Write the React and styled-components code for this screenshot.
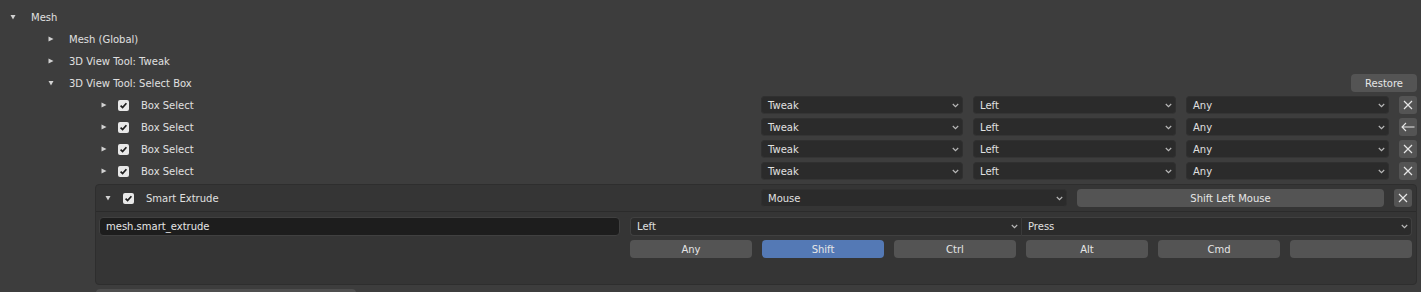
import React from 'react';
import styled, { createGlobalStyle } from 'styled-components';

const GlobalStyle = createGlobalStyle`
  html, body { margin: 0; padding: 0; background: #3d3d3d; }
  body {
    font-family: "DejaVu Sans", "Liberation Sans", sans-serif;
    font-size: 10px;
    color: #e6e6e6;
  }
  * { box-sizing: border-box; }
`;

const Page = styled.div`
  width: 1421px;
  height: 292px;
  overflow: hidden;
  padding-top: 6px;
  background: #3d3d3d;
`;

const TreeRow = styled.div`
  display: flex;
  align-items: center;
  height: 22px;
  padding-left: ${(p) => p.$pad}px;
  padding-right: 4px;
`;

const DisclosureBox = styled.span`
  display: inline-flex;
  flex: none;
  width: 6px;
  height: 6px;
  margin-right: ${(p) => p.$gap}px;
`;

const Label = styled.span`
  white-space: nowrap;
  color: #e0e0e0;
`;

const CheckBox = styled.span`
  display: inline-flex;
  flex: none;
  width: 11px;
  height: 11px;
  margin-right: 12px;
`;

const Controls = styled.div`
  margin-left: auto;
  display: grid;
  grid-template-columns: ${(p) => p.$cols};
  column-gap: 10px;
  align-items: center;
`;

const Select = styled.div`
  height: 18px;
  display: flex;
  align-items: center;
  justify-content: space-between;
  padding: 0 3px 0 6px;
  background: #2b2b2b;
  border: 1px solid #303030;
  border-bottom-color: #353535;
  border-radius: 4px;
  color: #e0e0e0;
`;

const JoinedSelect = styled(Select)`
  height: 19px;
  border-color: #404040;
  border-radius: ${(p) => (p.$side === 'left' ? '4px 0 0 4px' : '0 4px 4px 0')};
  ${(p) => (p.$side === 'right' ? 'border-left-color: #3a3a3a;' : 'border-right: none;')}
`;

const Button = styled.div`
  height: 18px;
  display: flex;
  align-items: center;
  justify-content: center;
  background: ${(p) => (p.$active ? '#5479b5' : '#545454')};
  border-radius: 4px;
  color: #e6e6e6;
  white-space: nowrap;
`;

const RestoreButton = styled(Button)`
  margin-left: auto;
  width: 66px;
`;

const IconButton = styled.div`
  width: 18px;
  height: 18px;
  display: flex;
  align-items: center;
  justify-content: center;
  background: #545454;
  border-radius: 3px;
`;

const Panel = styled.div`
  margin: 2px 4px 0 95px;
  width: 1322px;
  background: #353535;
  border: 1px solid #2e2e2e;
  border-radius: 4px;
`;

const PanelHeader = styled.div`
  display: flex;
  align-items: center;
  height: 27px;
  padding: 0 4px 0 9px;
  border-bottom: 1px solid #2b2b2b;
`;

const PanelBody = styled.div`
  display: grid;
  grid-template-columns: 521px 1fr;
  column-gap: 10px;
  row-gap: 4px;
  padding: 5px 4px 26px 3px;
`;

const TextField = styled.div`
  height: 19px;
  display: flex;
  align-items: center;
  padding: 0 6px;
  background: #1d1d1d;
  border: 1px solid #404040;
  border-radius: 4px;
  color: #e6e6e6;
`;

const SelectPair = styled.div`
  display: grid;
  grid-template-columns: 1fr 1fr;
`;

const ModRow = styled.div`
  grid-column: 2;
  display: grid;
  grid-template-columns: repeat(6, 1fr);
  column-gap: 10px;
`;

const NextWidget = styled.div`
  margin: 4px 0 0 96px;
  width: 260px;
  height: 20px;
  background: #4f4f4f;
  border-radius: 4px 4px 0 0;
`;

const Disclosure = ({ open, gap }) => (
  <DisclosureBox $gap={gap}>
    <svg width="6" height="6" viewBox="0 0 6 6">
      <path d={open ? 'M0.5 1 L5.5 1 L3 5.5 Z' : 'M0.5 0.5 L5.5 3 L0.5 5.5 Z'} fill="#d2d2d2" />
    </svg>
  </DisclosureBox>
);

const Check = () => (
  <CheckBox>
    <svg width="11" height="11" viewBox="0 0 11 11">
      <rect x="0" y="0" width="11" height="11" rx="2" fill="#e8e8e8" />
      <path d="M2.6 5.6 L4.6 7.6 L8.4 3.2" stroke="#1e1e1e" strokeWidth="1.7" fill="none" />
    </svg>
  </CheckBox>
);

const Chevron = () => (
  <svg width="7" height="5" viewBox="0 0 7 5">
    <path d="M0.8 1 L3.5 3.6 L6.2 1" stroke="#b8b8b8" strokeWidth="1.2" fill="none" />
  </svg>
);

const XIcon = () => (
  <svg width="10" height="10" viewBox="0 0 10 10">
    <path d="M1 1 L9 9 M9 1 L1 9" stroke="#e6e6e6" strokeWidth="1.2" fill="none" />
  </svg>
);

const BackIcon = () => (
  <svg width="14" height="10" viewBox="0 0 14 10">
    <path d="M1 5 H13.5 M5 1 L1 5 L5 9" stroke="#e6e6e6" strokeWidth="1.1" fill="none" />
  </svg>
);

const Dropdown = ({ children }) => (
  <Select>
    <span>{children}</span>
    <Chevron />
  </Select>
);

const items = [
  { icon: 'x' },
  { icon: 'back' },
  { icon: 'x' },
  { icon: 'x' },
];

const mods = [
  { label: 'Any' },
  { label: 'Shift', active: true },
  { label: 'Ctrl' },
  { label: 'Alt' },
  { label: 'Cmd' },
  { label: '' },
];

export default function App() {
  return (
    <>
      <GlobalStyle />
      <Page>
        <TreeRow $pad={10}>
          <Disclosure open gap={15} />
          <Label>Mesh</Label>
        </TreeRow>
        <TreeRow $pad={48}>
          <Disclosure gap={15} />
          <Label>Mesh (Global)</Label>
        </TreeRow>
        <TreeRow $pad={48}>
          <Disclosure gap={15} />
          <Label>3D View Tool: Tweak</Label>
        </TreeRow>
        <TreeRow $pad={48}>
          <Disclosure open gap={15} />
          <Label>3D View Tool: Select Box</Label>
          <RestoreButton>Restore</RestoreButton>
        </TreeRow>
        {items.map((it, i) => (
          <TreeRow key={i} $pad={101}>
            <Disclosure gap={11} />
            <Check />
            <Label>Box Select</Label>
            <Controls $cols="202px 203px 203px 18px">
              <Dropdown>Tweak</Dropdown>
              <Dropdown>Left</Dropdown>
              <Dropdown>Any</Dropdown>
              <IconButton>{it.icon === 'x' ? <XIcon /> : <BackIcon />}</IconButton>
            </Controls>
          </TreeRow>
        ))}
        <Panel>
          <PanelHeader>
            <Disclosure open gap={12} />
            <Check />
            <Label>Smart Extrude</Label>
            <Controls $cols="306px 307px 18px">
              <Dropdown>Mouse</Dropdown>
              <Button>Shift Left Mouse</Button>
              <IconButton><XIcon /></IconButton>
            </Controls>
          </PanelHeader>
          <PanelBody>
            <TextField>mesh.smart_extrude</TextField>
            <SelectPair>
              <JoinedSelect $side="left">
                <span>Left</span>
                <Chevron />
              </JoinedSelect>
              <JoinedSelect $side="right">
                <span>Press</span>
                <Chevron />
              </JoinedSelect>
            </SelectPair>
            <ModRow>
              {mods.map((m, i) => (
                <Button key={i} $active={m.active}>{m.label}</Button>
              ))}
            </ModRow>
          </PanelBody>
        </Panel>
        <NextWidget />
      </Page>
    </>
  );
}
